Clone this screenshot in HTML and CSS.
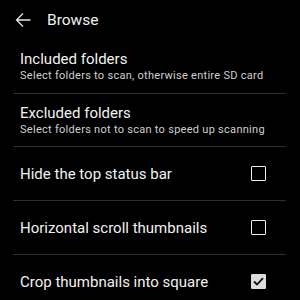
FILE: index.html
```html
<!DOCTYPE html>
<html>
<head>
<meta charset="utf-8">
<link rel="stylesheet" href="styles.css">
</head>
<body>
<div class="header">
  <svg class="back" width="16" height="16" viewBox="0 0 16 16"><path d="M15.5 8H1.5M8 1.5L1.5 8L8 14.5" fill="none" stroke="#e6e6e6" stroke-width="1.3"/></svg>
  <span class="title">Browse</span>
</div>
<div class="list">
  <div class="row two">
    <div class="texts">
      <div class="t">Included folders</div>
      <div class="s">Select folders to scan, otherwise entire SD card</div>
    </div>
  </div>
  <div class="row two">
    <div class="texts">
      <div class="t">Excluded folders</div>
      <div class="s">Select folders not to scan to speed up scanning</div>
    </div>
  </div>
  <div class="row check">
    <div class="t">Hide the top status bar</div>
    <span class="box"></span>
  </div>
  <div class="row check">
    <div class="t">Horizontal scroll thumbnails</div>
    <span class="box"></span>
  </div>
  <div class="row check">
    <div class="t">Crop thumbnails into square</div>
    <span class="box on"><svg width="11" height="9" viewBox="0 0 11 9"><path d="M1 4.5L4 7.5L10 1.2" fill="none" stroke="#111" stroke-width="1.8"/></svg></span>
  </div>
</div>
</body>
</html>
```
FILE: styles.css
```css
html, body {
  margin: 0;
  padding: 0;
  background: #000;
  font-family: Roboto, "Noto Sans", sans-serif;
  color: #f2f2f2;
  overflow: hidden;
}
.header {
  height: 40px;
  display: flex;
  align-items: center;
  padding-left: 15px;
}
.back {
  display: block;
}
.title {
  margin-left: 16px;
  font-size: 15.5px;
  color: #f0f0f0;
}
.list {
  padding: 0 14px 0 13px;
}
.row {
  display: flex;
  align-items: center;
  justify-content: space-between;
  padding: 0 20px 0 7px;
  box-sizing: border-box;
}
.row + .row {
  border-top: 1px solid #2e2e2e;
}
.row.two {
  height: 53px;
}
.row.check {
  height: 54px;
}
.t {
  font-size: 15px;
  line-height: 18px;
  color: #f2f2f2;
}
.s {
  font-size: 11px;
  letter-spacing: 0.28px;
  line-height: 14px;
  color: #cfcfcf;
  margin-top: 1px;
}
.box {
  width: 15px;
  height: 15px;
  box-sizing: border-box;
  border: 1.5px solid #eee;
  border-radius: 1px;
  display: flex;
  align-items: center;
  justify-content: center;
}
.box.on {
  background: #ddd;
  border-color: #ddd;
}
```
